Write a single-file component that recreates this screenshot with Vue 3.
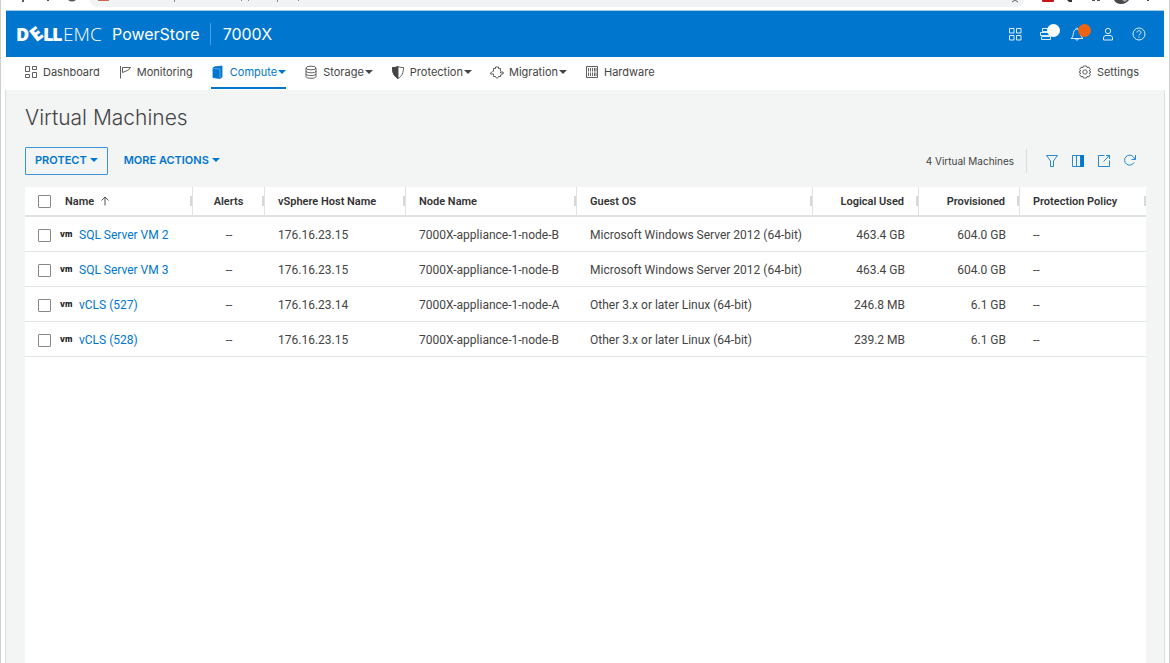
<script setup>
import { ref, computed } from 'vue'

const navItems = [
  { id: 'dashboard', label: 'Dashboard' },
  { id: 'monitoring', label: 'Monitoring' },
  { id: 'compute', label: 'Compute', menu: true },
  { id: 'storage', label: 'Storage', menu: true },
  { id: 'protection', label: 'Protection', menu: true },
  { id: 'migration', label: 'Migration', menu: true },
  { id: 'hardware', label: 'Hardware' }
]
const activeNav = ref('compute')

const machines = ref([
  { id: 1, name: 'SQL Server VM 2', host: '176.16.23.15', node: '7000X-appliance-1-node-B', os: 'Microsoft Windows Server 2012 (64-bit)', used: '463.4 GB', provisioned: '604.0 GB' },
  { id: 2, name: 'SQL Server VM 3', host: '176.16.23.15', node: '7000X-appliance-1-node-B', os: 'Microsoft Windows Server 2012 (64-bit)', used: '463.4 GB', provisioned: '604.0 GB' },
  { id: 3, name: 'vCLS (527)', host: '176.16.23.14', node: '7000X-appliance-1-node-A', os: 'Other 3.x or later Linux (64-bit)', used: '246.8 MB', provisioned: '6.1 GB' },
  { id: 4, name: 'vCLS (528)', host: '176.16.23.15', node: '7000X-appliance-1-node-B', os: 'Other 3.x or later Linux (64-bit)', used: '239.2 MB', provisioned: '6.1 GB' }
])

const selected = ref([])
const allSelected = computed({
  get: () => selected.value.length === machines.value.length,
  set: (value) => {
    selected.value = value ? machines.value.map((vm) => vm.id) : []
  }
})
</script>

<template>
  <div class="window">
    <div class="browser-bar">
      <svg class="browser-nav" width="84" height="4" viewBox="0 0 84 4">
        <path d="M16 0h2v2h-2zM41 0h2v1h-2zM62 0h8q-4 3-8 0z" />
      </svg>
      <div class="address">
        <svg class="address-marks" width="220" height="3" viewBox="0 0 220 3">
          <path d="M0 0h11v1H0z" fill="#cf6654" />
          <path d="M76 0h1v2h-1zM143 0h1v1h-1zM150 0h1v1h-1zM179 0h1v2h-1zM200 0h1v1h-1z" fill="#888" />
        </svg>
        <svg class="star" width="12" height="3" viewBox="0 0 12 3">
          <path d="M8 2l3-2M14 2L11 0" />
        </svg>
      </div>
      <svg class="extensions" width="140" height="6" viewBox="0 0 140 6">
        <path d="M18 0h12v1q0 1-1 1H19q-1 0-1-1z" fill="#c01818" />
        <path d="M43 0h5v2h-3z" fill="#333" />
        <path d="M68 0h3v1h-3zM73 0h3v1h-3z" fill="#555" />
        <path d="M90 0h15q-3 4-8 4t-7-4z" fill="#44474b" />
        <path d="M98 0h5l-2 2z" fill="#aaa" />
        <path d="M123 0h2v1h-2z" fill="#444" />
      </svg>
    </div>

    <header class="masthead">
      <svg class="logo" width="92" height="36" viewBox="-2 -8 92 36" role="img" aria-label="Dell EMC">
        <g fill="#fff" font-family="Open Sans, sans-serif" font-size="18">
          <text x="-2" y="17" font-weight="800">D</text>
          <text x="13" y="17" font-weight="800" font-size="19" transform="rotate(-38 18 10)">E</text>
          <text x="25" y="17" font-weight="800">L</text>
          <text x="34" y="17" font-weight="800">L</text>
          <text x="45" y="17" font-weight="300" font-size="19">EMC</text>
        </g>
      </svg>
      <span class="product">PowerStore</span>
      <span class="model">7000X</span>
      <div class="masthead-tools">
        <button type="button" aria-label="Applications">
          <svg width="14" height="14" viewBox="0 0 14 14"><path d="M1.500 1.500h4.500v4.500h-4.500zM8.500 1.500h4.500v4.500h-4.500zM1.500 8.500h4.500v4.500h-4.500zM8.500 8.500h4.500v4.500h-4.500z" /></svg>
        </button>
        <button type="button" aria-label="Jobs">
          <svg width="14" height="14" viewBox="0 0 14 14"><path d="M3.500 1.500h8v3h-8zM1.500 5.500h9v3h-9zM3 9.500h8.500v3h-9v-3" /></svg>
          <span class="dot"></span>
        </button>
        <button type="button" aria-label="Alerts">
          <svg width="14" height="14" viewBox="0 0 14 14"><path d="M1 11.500c2-1.500 2-3 2.500-6C4 3 5.500 2 7 2s3 1 3.500 3.500c.5 3 .5 4.500 2.500 6zM5.500 12c.5 1.500 2.500 1.500 3 0M7 2V.5" /></svg>
          <span class="dot dot-alert"></span>
        </button>
        <button type="button" aria-label="User">
          <svg width="14" height="14" viewBox="0 0 14 14"><circle cx="7" cy="4" r="2.700" /><path d="M2.500 13v-2c0-1.500 1-2.500 2.500-2.500h4c1.500 0 2.500 1 2.500 2.500v2z" /></svg>
        </button>
        <button type="button" aria-label="Help">
          <svg width="14" height="14" viewBox="0 0 14 14"><circle cx="7" cy="7" r="6" /><path d="M5 5.500c0-2.500 4-2.500 4 0C9 7 7 7 7 8.500M7 9.700v1.200" /></svg>
        </button>
      </div>
    </header>

    <nav class="main-nav">
      <a
        v-for="item in navItems"
        :key="item.id"
        href="#"
        class="nav-item"
        :class="{ active: item.id === activeNav }"
        @click.prevent="activeNav = item.id"
      >
        <svg v-if="item.id === 'dashboard'" width="14" height="14" viewBox="0 0 14 14"><path d="M1.500 1.500h4v5h-4zM8.500 1.500h4v3h-4zM1.500 9.500h4v3h-4zM8.500 7.500h4v5h-4z" /></svg>
        <svg v-else-if="item.id === 'monitoring'" width="14" height="14" viewBox="0 0 14 14"><path d="M2.500 1v12.500M4.500 2.500h8l-2 2.500-6 2.500z" /></svg>
        <svg v-else-if="item.id === 'compute'" width="14" height="14" viewBox="0 0 14 14"><path class="solid" d="M3 2l8-1v11l-2 1.500-7-1V3z" /><path class="edge" d="M2.500 3.500l6.500.5v9" /></svg>
        <svg v-else-if="item.id === 'storage'" width="14" height="14" viewBox="0 0 14 14"><ellipse cx="7" cy="3" rx="5" ry="1.800" /><path d="M2 3v8.500c0 2.400 10 2.400 10 0V3M2 6c0 2.400 10 2.400 10 0M2 8.800c0 2.400 10 2.400 10 0" /></svg>
        <svg v-else-if="item.id === 'protection'" width="14" height="14" viewBox="0 0 14 14"><path d="M7 1.500c2 1 3.500 1 5.500 1C12.500 8 11 11 7 13.500 3 11 1.500 8 1.500 2.500c2 0 3.500 0 5.500-1z" /><path class="solid" d="M7 1.500v12C3 11 1.500 8 1.500 2.500c2 0 3.500 0 5.500-1z" /></svg>
        <svg v-else-if="item.id === 'migration'" width="14" height="14" viewBox="0 0 14 14"><path d="M3.500 6V3.500h2V2h3v1.500h2V6M3.500 10.500v1h2c0 2 3 2 3 0h2v-1M3.500 6.500C2 6.500 .5 7.500 .5 9h3v1.500M10.500 6.500V8h3M11.500 6l2 2-2 2h-1v1" /></svg>
        <svg v-else width="14" height="14" viewBox="0 0 14 14"><path d="M1.500 1.500h11v11h-11zM3.500 3v3.500M5.500 3v3.500M7.500 3v3.500M9.500 3v3.500M11 3v3.500M3.500 7.500V11M5.500 7.500V11M7.500 7.500V11M9.500 7.500V11M11 7.500V11" /></svg>
        <span>{{ item.label }}</span>
        <i v-if="item.menu" class="caret"></i>
      </a>
      <a href="#" class="nav-item settings">
        <svg width="14" height="14" viewBox="0 0 14 14"><path d="M5.500 1h3l.5 1.500 2-.3 1.300 2.300-1 1.500 1.700 1-1.700 1 1 1.500-1.300 2.300-2-.3-.5 1.500h-3L5 11.500l-2 .3-1.300-2.300 1-1.500L1 7l1.700-1-1-1.500L3 2.200l2 .3z" /><circle cx="7" cy="7" r="2.200" /></svg>
        <span>Settings</span>
      </a>
    </nav>

    <main class="content">
      <h1>Virtual Machines</h1>

      <div class="toolbar">
        <button type="button" class="btn btn-outline">PROTECT <i class="caret"></i></button>
        <button type="button" class="btn">MORE ACTIONS <i class="caret"></i></button>
        <span class="count">{{ machines.length }} Virtual Machines</span>
        <div class="table-tools">
          <button type="button" aria-label="Filter">
            <svg width="14" height="14" viewBox="0 0 14 14"><path d="M1.500 1.500h11L8.500 7v5.500h-3V7z" /></svg>
          </button>
          <button type="button" aria-label="Columns">
            <svg width="14" height="14" viewBox="0 0 14 14"><path d="M1.500 1.500h11v11h-11zM5.500 1.500v11" /><path class="solid" d="M9.500 1.500h3v11h-3z" /></svg>
          </button>
          <button type="button" aria-label="Export">
            <svg width="14" height="14" viewBox="0 0 14 14"><path d="M7.500 1.500h-6v11h11v-6M9 1.500h3.500V5M12.500 1.500L6.500 7.500" /></svg>
          </button>
          <button type="button" aria-label="Refresh">
            <svg width="14" height="14" viewBox="0 0 14 14"><path d="M11 8.500A5 5 0 1 1 10.500 3l1.500 2M12.500 1v4.500H8.500" /></svg>
          </button>
        </div>
      </div>

      <div class="grid">
        <table>
          <colgroup>
            <col class="col-check" />
            <col class="col-name" />
            <col class="col-alerts" />
            <col class="col-host" />
            <col class="col-node" />
            <col />
            <col class="col-used" />
            <col class="col-prov" />
            <col class="col-policy" />
          </colgroup>
          <thead>
            <tr>
              <th class="check"><input v-model="allSelected" type="checkbox" aria-label="Select all" /></th>
              <th class="name split">
                Name
                <svg class="sort" width="10" height="10" viewBox="0 0 10 10"><path d="M5 9.500V1M1.500 4.500L5 1l3.500 3.500" /></svg>
              </th>
              <th class="center split">Alerts</th>
              <th class="split">vSphere Host Name</th>
              <th class="split">Node Name</th>
              <th class="split">Guest OS</th>
              <th class="right split">Logical Used</th>
              <th class="right split">Provisioned</th>
              <th class="last">Protection Policy</th>
            </tr>
          </thead>
          <tbody>
            <tr v-for="vm in machines" :key="vm.id">
              <td class="check"><input v-model="selected" type="checkbox" :value="vm.id" :aria-label="vm.name" /></td>
              <td class="vm-name"><span class="vm-mark">vm</span><a href="#">{{ vm.name }}</a></td>
              <td class="center">--</td>
              <td>{{ vm.host }}</td>
              <td>{{ vm.node }}</td>
              <td>{{ vm.os }}</td>
              <td class="right">{{ vm.used }}</td>
              <td class="right">{{ vm.provisioned }}</td>
              <td>--</td>
            </tr>
          </tbody>
        </table>
      </div>
    </main>
  </div>
</template>

<style>
html,
body,
#app {
  height: 100%;
}
</style>

<style scoped>
.window {
  display: flex;
  flex-direction: column;
  box-sizing: border-box;
  min-height: 100%;
  padding: 0 5px;
  border-left: 1px solid #cfcfcf;
  border-right: 1px solid #cfcfcf;
  background: #fff;
  color: #444;
  font-family: Inter, sans-serif;
}

.browser-bar {
  display: flex;
  align-items: flex-start;
  height: 10px;
  border-bottom: 1px solid #a9cbe4;
}

.address {
  display: flex;
  justify-content: space-between;
  flex: 1;
  height: 7px;
  padding: 0 8px;
  border-radius: 0 0 8px 8px;
  background: #f1f3f4;
}

svg {
  flex: none;
  fill: none;
  stroke: currentColor;
  stroke-width: 1;
  stroke-opacity: 0.85;
}

.star {
  overflow: visible;
}

.browser-nav,
.address-marks,
.extensions {
  fill: #55585c;
  stroke: none;
}

.masthead {
  display: flex;
  align-items: center;
  height: 46px;
  padding: 0 18px 0 10px;
  background: #0076ce;
  color: #fff;
}

.logo {
  stroke: none;
}

.product {
  margin-left: 4px;
  padding-right: 10px;
  border-right: 1px solid #4a9fdd;
  font-size: 16px;
  line-height: 22px;
}

.model {
  margin-left: 12px;
  font-size: 16px;
}

.masthead-tools {
  display: flex;
  gap: 17px;
  margin-left: auto;
}

.masthead-tools button,
.table-tools button {
  position: relative;
  display: flex;
  padding: 0;
  border: 0;
  background: none;
  color: inherit;
  cursor: pointer;
}

.dot {
  position: absolute;
  top: -3px;
  left: 8px;
  width: 13px;
  height: 13px;
  border-radius: 50%;
  background: #fff;
}

.dot-alert {
  background: #ee6411;
}

.main-nav {
  display: flex;
  gap: 18px;
  height: 33px;
  padding: 0 25px 0 18px;
}

.nav-item {
  display: flex;
  align-items: center;
  box-sizing: border-box;
  height: 32px;
  border-bottom: 2px solid transparent;
  color: #444;
  font-size: 11px;
  text-decoration: none;
}

.nav-item svg {
  margin-right: 5px;
}

.nav-item .caret {
  margin-left: 1px;
}

.nav-item.active {
  border-bottom-color: #0076ce;
  color: #0076ce;
}

.settings {
  margin-left: auto;
}

.solid {
  fill: currentColor;
}

.edge {
  stroke: #66ade2;
}

.caret {
  display: inline-block;
  border: 4px solid transparent;
  border-top-color: currentColor;
  border-bottom: 0;
}

.content {
  display: flex;
  flex-direction: column;
  flex: 1;
  margin: 0 -1px;
  padding: 12px 18px 0 19px;
  border-right: 1px solid #ddd;
  border-left: 1px solid #ddd;
  background: #f3f4f4;
}

h1 {
  margin: 0;
  color: #444;
  font-size: 21px;
  font-weight: 300;
  line-height: 32px;
}

.toolbar {
  display: flex;
  align-items: center;
  height: 28px;
  margin: 13px 0 12px;
}

.btn {
  display: flex;
  align-items: center;
  gap: 3px;
  box-sizing: border-box;
  height: 28px;
  padding: 0 16px 2px;
  border: 0;
  background: none;
  color: #0076ce;
  font-family: inherit;
  font-size: 11px;
  font-weight: 600;
  cursor: pointer;
}

.btn-outline {
  padding: 0 9px 2px;
  border: 1px solid #3a94d9;
  border-radius: 1px;
}

.count {
  margin-left: auto;
  padding-right: 12px;
  border-right: 1px solid #ddd;
  font-size: 10px;
  line-height: 24px;
}

.table-tools {
  display: flex;
  gap: 12px;
  padding: 0 9px 0 18px;
  color: #0076ce;
}

.grid {
  flex: 1;
  background: #fff;
}

table {
  width: 100%;
  border-collapse: separate;
  border-spacing: 0;
  table-layout: fixed;
  font-family: Roboto, sans-serif;
  font-size: 12px;
}

.col-check {
  width: 35px;
}

.col-name {
  width: 133px;
}

.col-alerts {
  width: 72px;
}

.col-host {
  width: 141px;
}

.col-node {
  width: 171px;
}

.col-used {
  width: 106px;
}

.col-prov {
  width: 101px;
}

.col-policy {
  width: 126px;
}

th,
td {
  box-sizing: border-box;
  height: 35px;
  padding: 2px 13px 0;
  border-bottom: 1px solid #e2e4e8;
  text-align: left;
  white-space: nowrap;
}

th {
  height: 30px;
  padding-top: 0;
  border-bottom: 2px solid #e0e1e4;
  color: #333;
  font-size: 11px;
  font-weight: 600;
}

/* column edge with the darker resize grip in the middle */
.split,
.last {
  background: linear-gradient(#d6d9db, #d6d9db) no-repeat right center / 2px 10px;
}

.split {
  border-right: 1px solid #e2e2e2;
}

.check {
  padding-right: 0;
}

.name {
  padding-left: 5px;
}

.sort {
  margin-left: 3px;
  vertical-align: -1px;
}

.center {
  padding-right: 0;
  padding-left: 0;
  text-align: center;
}

.right {
  padding-right: 14px;
  text-align: right;
}

.vm-name {
  padding-right: 0;
  padding-left: 0;
}

.vm-name a {
  color: #0076ce;
  text-decoration: none;
}

.vm-mark {
  display: inline-block;
  width: 19px;
  color: #222;
  font-family: Inter, sans-serif;
  font-size: 8px;
  font-weight: 800;
  vertical-align: 2px;
}

input[type='checkbox'] {
  display: block;
  width: 13px;
  height: 13px;
  margin: 0;
  border: 1px solid #888;
  border-radius: 1px;
  background: #fff;
  appearance: none;
}

input[type='checkbox']:checked {
  background: #0076ce;
}
</style>
